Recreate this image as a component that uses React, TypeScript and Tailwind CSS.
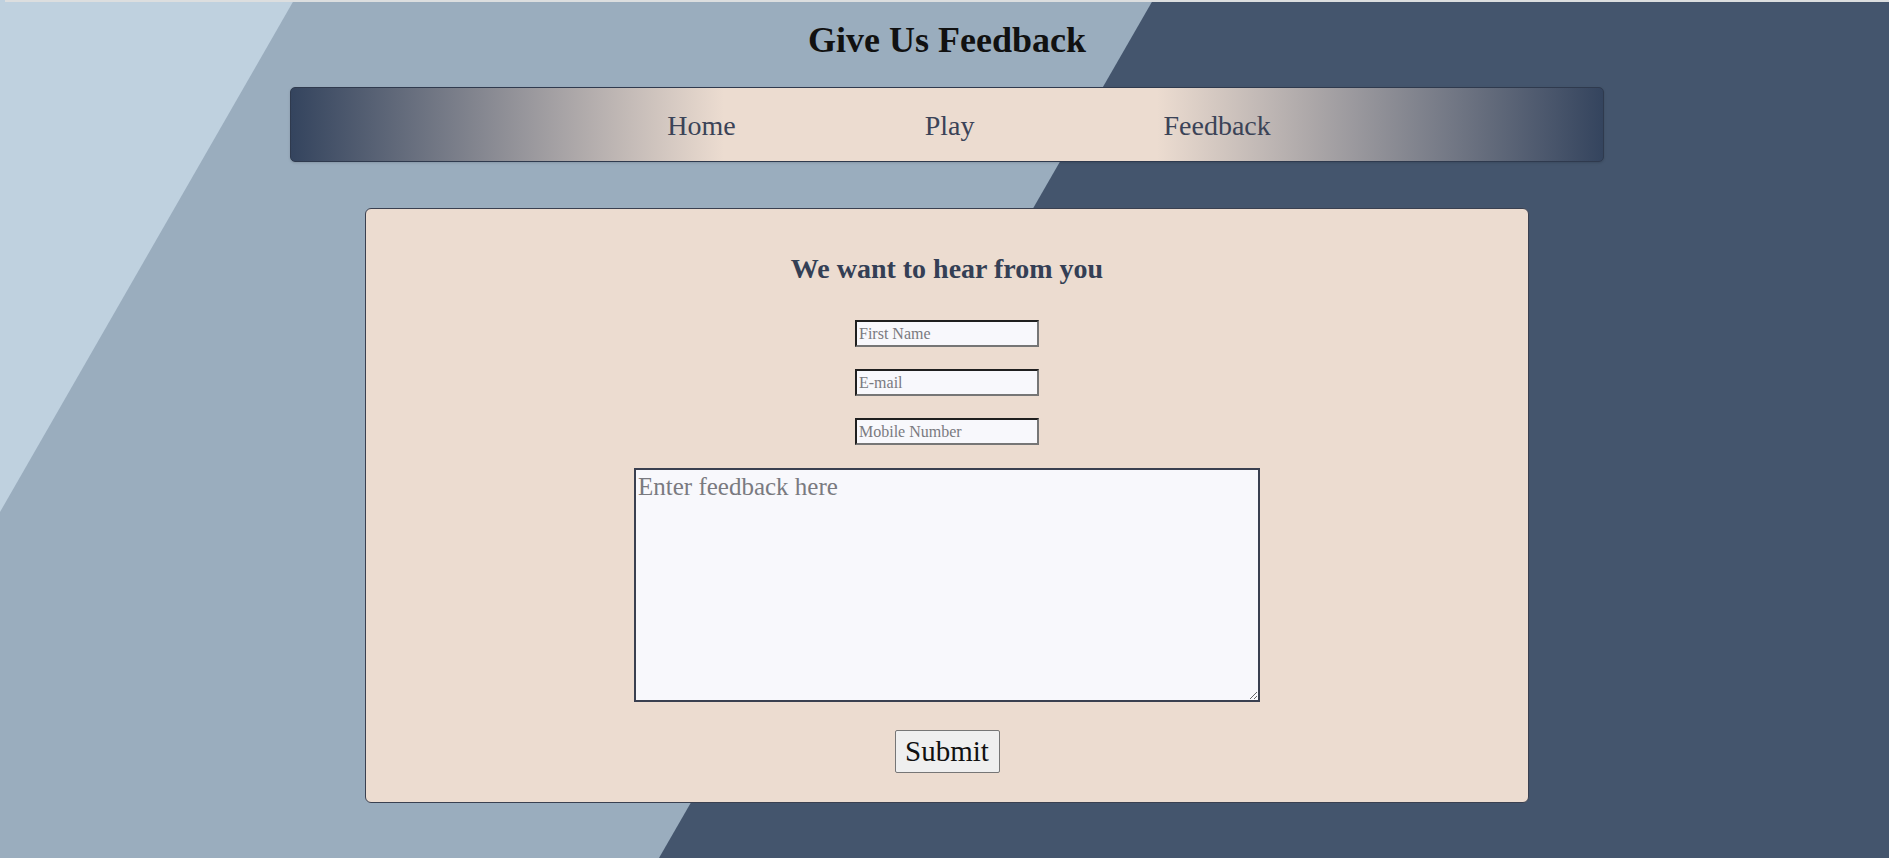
import React from 'react';

const serif = { fontFamily: '"Liberation Serif", "Times New Roman", serif' };

const Backdrop = () => (
  <svg
    className="absolute inset-0 h-full w-full"
    viewBox="0 0 1889 858"
    preserveAspectRatio="none"
    aria-hidden="true"
  >
    <rect x="0" y="0" width="1889" height="858" fill="#9aadbe" />
    <polygon points="0,0 294,0 0,512" fill="#bfd1df" />
    <polygon points="1153,0 1889,0 1889,858 659,858" fill="#44556d" />
  </svg>
);

const navLinks = ['Home', 'Play', 'Feedback'];

const fieldClass =
  'h-[27px] w-[184px] border-2 border-t-[#1f1f1f] border-l-[#1f1f1f] border-b-[#767676] border-r-[#767676] bg-[#f8f8fc] px-[2px] text-[16px] text-[#222] placeholder:text-[#7a7a80] outline-none';

export default function App() {
  return (
    <div className="relative h-[858px] w-full overflow-hidden" style={serif}>
      <Backdrop />
      <div className="relative flex flex-col pl-[5px]">
        <div className="h-[2px] w-full bg-[#dcdedf]" />

        <header className="h-[85px] pt-[20px] text-center">
          <h1 className="text-[36px] font-bold leading-none text-[#111]">Give Us Feedback</h1>
        </header>

        <nav className="mx-auto flex h-[75px] w-[1314px] items-center justify-center gap-[189px] rounded-[5px] border border-[#2f3a4e] bg-[linear-gradient(to_right,#34445e_0%,#ecdcd0_33%,#ecdcd0_66%,#34445e_100%)] pl-[44px] pt-[2px] shadow-sm">
          {navLinks.map((link) => (
            <a key={link} href="#" className="text-[28px] leading-[32px] text-[#3b4357]">
              {link}
            </a>
          ))}
        </nav>

        <main className="mx-auto mt-[46px] flex h-[595px] w-[1164px] flex-col items-center rounded-[6px] border border-[#3a4050] bg-[#ecdcd0] pt-[44px]">
          <h2 className="text-[28px] font-bold leading-[32px] text-[#343f55]">We want to hear from you</h2>

          <form className="flex flex-col items-center" onSubmit={(e) => e.preventDefault()}>
            <input type="text" placeholder="First Name" className={`mt-[35px] ${fieldClass}`} />
            <input type="email" placeholder="E-mail" className={`mt-[22px] ${fieldClass}`} />
            <input type="tel" placeholder="Mobile Number" className={`mt-[22px] ${fieldClass}`} />

            <textarea
              placeholder="Enter feedback here"
              className="mt-[23px] h-[234px] w-[626px] border-2 border-[#3a4050] bg-[#f8f8fc] px-[2px] pt-[2px] text-[25px] leading-[30px] text-[#222] outline-none placeholder:text-[#7a7a80]"
            />

            <button
              type="submit"
              className="mt-[28px] h-[43px] w-[105px] rounded-[2px] border border-[#767676] bg-[#efefef] text-[29px] leading-none text-[#111]"
            >
              Submit
            </button>
          </form>
        </main>
      </div>
    </div>
  );
}
